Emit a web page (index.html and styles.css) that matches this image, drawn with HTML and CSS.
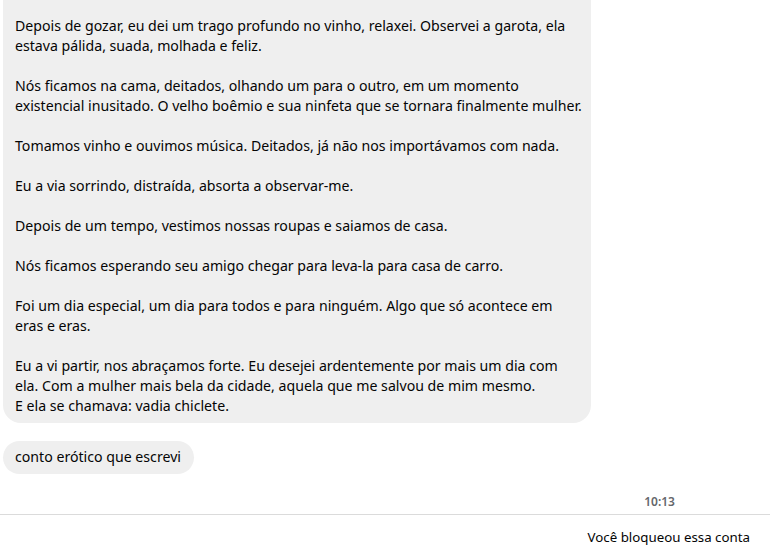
FILE: index.html
```html
<!DOCTYPE html>
<html lang="pt">
<head>
    <meta charset="UTF-8">
    <meta name="viewport" content="width=device-width, initial-scale=1.0">
    <title>Mensagens</title>
    <link rel="stylesheet" href="styles.css">
</head>
<body>
    <div id="chat">
        <div class="bubble long">
            <p>Depois de gozar, eu dei um trago profundo no vinho, relaxei. Observei a garota, ela<br>estava pálida, suada, molhada e feliz.</p>
            <p>Nós ficamos na cama, deitados, olhando um para o outro, em um momento<br>existencial inusitado. O velho boêmio e sua ninfeta que se tornara finalmente mulher.</p>
            <p>Tomamos vinho e ouvimos música. Deitados, já não nos importávamos com nada.</p>
            <p>Eu a via sorrindo, distraída, absorta a observar-me.</p>
            <p>Depois de um tempo, vestimos nossas roupas e saiamos de casa.</p>
            <p>Nós ficamos esperando seu amigo chegar para leva-la para casa de carro.</p>
            <p>Foi um dia especial, um dia para todos e para ninguém. Algo que só acontece em<br>eras e eras.</p>
            <p>Eu a vi partir, nos abraçamos forte. Eu desejei ardentemente por mais um dia com<br>ela. Com a mulher mais bela da cidade, aquela que me salvou de mim mesmo.<br>E ela se chamava: vadia chiclete.</p>
        </div>
        <div class="bubble short">conto erótico que escrevi</div>
        <div class="time">10:13</div>
    </div>
    <footer>Você bloqueou essa conta</footer>
</body>
</html>
```
FILE: styles.css
```css
body{
    margin: 0;
    background-color: white;
    font-family: "Segoe UI", "Noto Sans", sans-serif;
    font-size: 14.15px;
    color: #050505;
}
#chat{
    padding: 0 0 4px 3px;
    display: flex;
    flex-direction: column;
    align-items: flex-start;
}
.bubble{
    background-color: #efefef;
    line-height: 20px;
}
.long{
    width: 564px;
    padding: 16px 12px 7px 12px;
    border-radius: 0 0 18px 18px;
}
.long p{
    margin: 0 0 20px 0;
    white-space: nowrap;
}
.long p:last-child{
    margin: 0;
}
.short{
    margin-top: 18px;
    padding: 6px 13px 7px 12px;
    border-radius: 17px;
}
.time{
    align-self: flex-end;
    margin: 20px 95px 0 0;
    font-size: 12px;
    font-weight: 600;
    line-height: 16px;
    color: #65676b;
}
footer{
    border-top: 1px solid #dbdbdb;
    padding: 12px 20px 0 0;
    text-align: right;
    font-size: 13.3px;
    line-height: 20px;
}
```
